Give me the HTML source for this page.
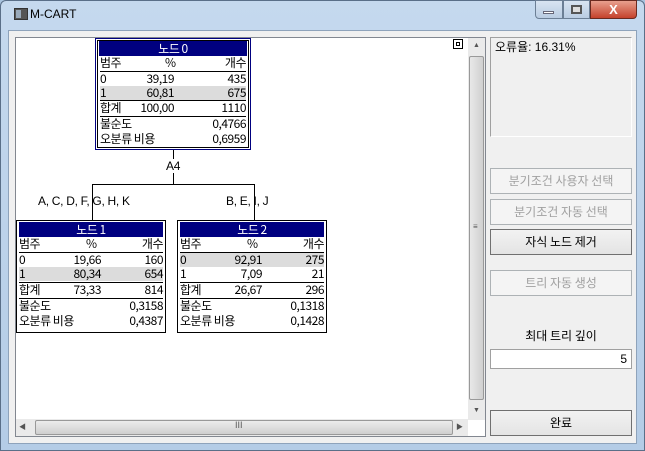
<!DOCTYPE html>
<html><head><meta charset="utf-8"><style>
*{margin:0;padding:0;box-sizing:border-box}
body{width:645px;height:451px;overflow:hidden;background:#a9c4df;font-family:"Liberation Sans","Noto Sans CJK KR",sans-serif;font-size:12px;position:relative}
.a{position:absolute}
.frame{left:0;top:0;width:645px;height:451px;background:linear-gradient(#c5d9ee,#b4cce6);border:1px solid #5a6f88;border-radius:6px 6px 0 0}
.client{left:8px;top:30px;width:629px;height:414px;background:#f0f0f0;border:1px solid #8ea3bb}
.canvas{left:15px;top:37px;width:471px;height:400px;background:#fff;border:1px solid #828790}
.node{position:absolute;background:#fff;border:1px solid #000;font-size:12px;line-height:14px;font-family:"Noto Sans CJK KR","Liberation Sans",sans-serif;letter-spacing:-0.5px}
.node .h{position:absolute;left:2px;right:2px;top:1px;height:15px;background:#000080;color:#fff;text-align:center;line-height:15px}
.node .r{position:absolute;left:2px;right:2px;height:14px}
.node .r span{position:absolute;top:0}
.node .ln{position:absolute;left:2px;right:2px;height:1px;background:#000}
.g{background:#dcdcdc}
.btn{position:absolute;left:490px;width:142px;height:26px;border:1px solid #707070;background:linear-gradient(#f2f2f2,#e4e4e4);text-align:center;line-height:24px;font-size:12px;font-family:"Noto Sans CJK KR",sans-serif;color:#000}
.dis{color:#a0a0a0;border-color:#adb2b5;background:#f4f4f4}
.lbl{position:absolute;font-size:12px;font-family:"Liberation Sans","Noto Sans CJK KR",sans-serif;line-height:13px;letter-spacing:-0.3px}
</style></head><body>
<div class="a frame"></div>
<div class="a" style="left:14px;top:8px;width:14px;height:12px;background:#555;border:1px solid #333"></div>
<div class="a" style="left:16px;top:10px;width:5px;height:8px;background:#9ab"></div>
<div class="a" style="left:30px;top:7px;font-size:12px">M-CART</div>
<div class="a" style="left:535px;top:0;width:28px;height:19px;border:1px solid #6c7f95;border-radius:0 0 0 4px;background:linear-gradient(#d8e4f1,#b9cce2)"></div>
<div class="a" style="left:543px;top:11px;width:11px;height:3px;background:#fff;border:1px solid #667"></div>
<div class="a" style="left:563px;top:0;width:27px;height:19px;border:1px solid #6c7f95;background:linear-gradient(#d8e4f1,#b9cce2)"></div>
<div class="a" style="left:571px;top:5px;width:11px;height:9px;border:2px solid #555;background:#ddd"></div>
<div class="a" style="left:590px;top:0;width:47px;height:19px;border:1px solid #6a2a20;border-radius:0 0 4px 0;background:linear-gradient(#e8a08e,#c5422c);color:#fff;font-weight:bold;text-align:center;line-height:18px;font-size:13px">X</div>
<div class="a client"></div>
<div class="a canvas"></div>
<div class="a" style="left:468px;top:38px;width:17px;height:382px;background:#eaeaea"></div>
<div class="a" style="left:469px;top:56px;width:15px;height:344px;background:linear-gradient(90deg,#e8e8e8,#d0d0d0);border:1px solid #999;border-radius:2px"></div>
<div class="a" style="left:473px;top:222px;font-size:8px;color:#555">≡</div>
<div class="a" style="left:473px;top:42px;font-size:7px;color:#555">▲</div>
<div class="a" style="left:473px;top:407px;font-size:7px;color:#555">▼</div>
<div class="a" style="left:16px;top:419px;width:452px;height:17px;background:#eaeaea"></div>
<div class="a" style="left:35px;top:420px;width:418px;height:15px;background:linear-gradient(#ececec,#cfcfcf);border:1px solid #999;border-radius:2px"></div>
<div class="a" style="left:235px;top:420px;font-size:9px;color:#555">III</div>
<div class="a" style="left:19px;top:422px;font-size:7px;color:#555">◀</div>
<div class="a" style="left:456px;top:422px;font-size:7px;color:#555">▶</div>
<div class="a" style="left:453px;top:39px;width:10px;height:10px;border:1px solid #000"></div>
<div class="a" style="left:456px;top:42px;width:4px;height:4px;border:1px solid #000"></div>
<div class="a" style="left:173px;top:149px;width:1px;height:10px;background:#000"></div>
<div class="lbl" style="left:166px;top:160px">A4</div>
<div class="a" style="left:173px;top:173px;width:1px;height:11px;background:#000"></div>
<div class="a" style="left:92px;top:184px;width:163px;height:1px;background:#000"></div>
<div class="a" style="left:92px;top:184px;width:1px;height:36px;background:#000"></div>
<div class="a" style="left:254px;top:184px;width:1px;height:36px;background:#000"></div>
<div class="lbl" style="left:38px;top:195px">A, C, D, F, G, H, K</div>
<div class="lbl" style="left:226px;top:195px">B, E, I, J</div>

<div class="node" style="left:95px;top:38px;width:156px;height:112px;border:1px solid #000080;padding:1px">
<div style="position:absolute;left:1px;top:1px;right:1px;bottom:1px;border:1px solid #000"></div>
<div class="h" style="left:3px;right:3px;top:2px">노드 0</div>
<div class="r" style="top:17px;left:4px;right:4px"><span style="left:0">범주</span><span style="left:65px">%</span><span style="right:0">개수</span></div>
<div class="ln" style="top:32px;left:4px;right:4px"></div>
<div class="r" style="top:33px;left:4px;right:4px"><span style="left:0">0</span><span style="right:72px">39,19</span><span style="right:0">435</span></div>
<div class="r g" style="top:47px;left:4px;right:4px"><span style="left:0">1</span><span style="right:72px">60,81</span><span style="right:0">675</span></div>
<div class="ln" style="top:61px;left:4px;right:4px"></div>
<div class="r" style="top:62px;left:4px;right:4px"><span style="left:0">합계</span><span style="right:72px">100,00</span><span style="right:0">1110</span></div>
<div class="ln" style="top:77px;left:4px;right:4px"></div>
<div class="r" style="top:78px;left:4px;right:4px"><span style="left:0">불순도</span><span style="right:0">0,4766</span></div>
<div class="r" style="top:93px;left:4px;right:4px"><span style="left:0">오분류 비용</span><span style="right:0">0,6959</span></div>
</div>

<div class="node" style="left:16px;top:220px;width:150px;height:113px">
<div class="h">노드 1</div>
<div class="r" style="top:16px"><span style="left:0">범주</span><span style="left:67px">%</span><span style="right:0">개수</span></div>
<div class="ln" style="top:31px"></div>
<div class="r" style="top:32px"><span style="left:0">0</span><span style="right:62px">19,66</span><span style="right:0">160</span></div>
<div class="r g" style="top:46px"><span style="left:0">1</span><span style="right:62px">80,34</span><span style="right:0">654</span></div>
<div class="ln" style="top:61px"></div>
<div class="r" style="top:62px"><span style="left:0">합계</span><span style="right:62px">73,33</span><span style="right:0">814</span></div>
<div class="ln" style="top:77px"></div>
<div class="r" style="top:78px"><span style="left:0">불순도</span><span style="right:0">0,3158</span></div>
<div class="r" style="top:93px"><span style="left:0">오분류 비용</span><span style="right:0">0,4387</span></div>
</div>

<div class="node" style="left:177px;top:220px;width:150px;height:113px">
<div class="h">노드 2</div>
<div class="r" style="top:16px"><span style="left:0">범주</span><span style="left:67px">%</span><span style="right:0">개수</span></div>
<div class="ln" style="top:31px"></div>
<div class="r g" style="top:32px"><span style="left:0">0</span><span style="right:62px">92,91</span><span style="right:0">275</span></div>
<div class="r" style="top:46px"><span style="left:0">1</span><span style="right:62px">7,09</span><span style="right:0">21</span></div>
<div class="ln" style="top:61px"></div>
<div class="r" style="top:62px"><span style="left:0">합계</span><span style="right:62px">26,67</span><span style="right:0">296</span></div>
<div class="ln" style="top:77px"></div>
<div class="r" style="top:78px"><span style="left:0">불순도</span><span style="right:0">0,1318</span></div>
<div class="r" style="top:93px"><span style="left:0">오분류 비용</span><span style="right:0">0,1428</span></div>
</div>

<div class="a" style="left:490px;top:37px;width:142px;height:100px;border:1px solid #a0a0a0;border-right-color:#fff;border-bottom-color:#fff;background:#f0f0f0"></div>
<div class="a" style="left:495px;top:38px;font-size:12px;font-family:'Liberation Sans','Noto Sans CJK KR',sans-serif">오류율: 16.31%</div>
<div class="btn dis" style="top:168px">분기조건 사용자 선택</div>
<div class="btn dis" style="top:199px">분기조건 자동 선택</div>
<div class="btn" style="top:229px">자식 노드 제거</div>
<div class="btn dis" style="top:270px">트리 자동 생성</div>
<div class="a" style="left:490px;top:327px;width:142px;text-align:center;font-family:'Noto Sans CJK KR',sans-serif">최대 트리 깊이</div>
<div class="a" style="left:490px;top:349px;width:142px;height:20px;background:#fff;border:1px solid #a0a0a0;text-align:right;padding-right:4px;line-height:18px;font-size:12px">5</div>
<div class="btn" style="top:410px">완료</div>
</body></html>
